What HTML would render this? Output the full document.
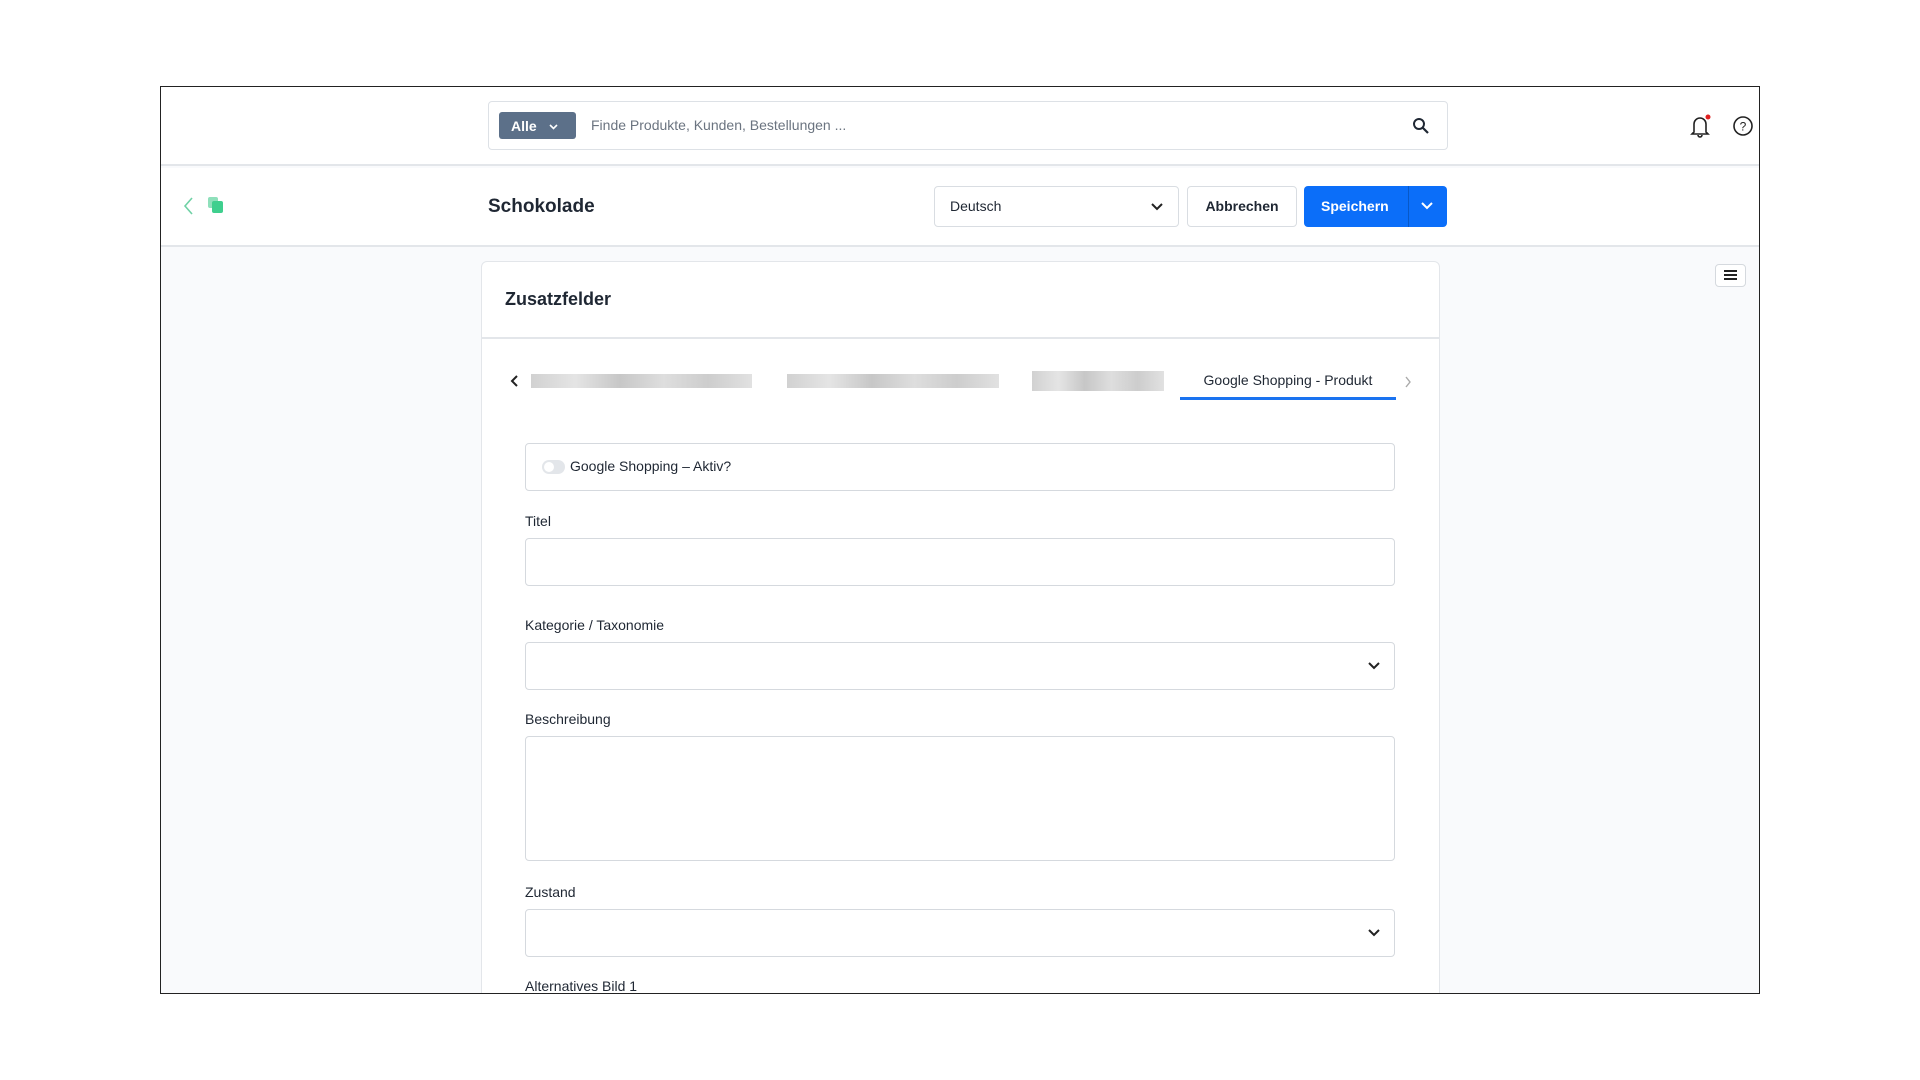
<!DOCTYPE html>
<html><head><meta charset="utf-8"><style>
*{box-sizing:border-box;margin:0;padding:0}
body{width:1920px;height:1080px;background:#fff;font-family:"Liberation Sans",Arial,sans-serif;color:#1f2733;position:relative;overflow:hidden}
.frame{position:absolute;left:160px;top:86px;width:1600px;height:908px;border:1.5px solid #222;overflow:hidden;background:#f9fafc}
.abs{position:absolute}
.top{left:0;top:0;width:100%;height:79px;background:#fff;border-bottom:2px solid #e3e6ea}
.bar2{left:0;top:81px;width:100%;height:79px;background:#fff;border-bottom:2px solid #e3e6ea}
.search{left:327px;top:14px;width:960px;height:49px;border:1.5px solid #dde1e6;border-radius:4px;background:#fff}
.alle{left:10px;top:10px;width:77px;height:27px;background:#5c7089;border-radius:3px;color:#fff;font-weight:bold;font-size:14px;line-height:28px;padding-left:12px}
.ph{left:102px;top:15px;font-size:14px;color:#6b7480}
.btn{border:1.5px solid #d9dde2;border-radius:4px;background:#fff;font-size:14px;line-height:38px}
.card{left:320px;top:174px;width:959px;height:760px;background:#fff;border:1.5px solid #e3e6ea;border-radius:6px}
.lbl{font-size:14px;color:#1f2733;position:absolute;left:43px}
.inp{position:absolute;left:43px;width:870px;border:1.5px solid #d5d9de;border-radius:4px;background:#fff}
.blur{position:absolute;top:112px;height:14px;background:linear-gradient(90deg,#c9c9c9,#e0e0e0 20%,#bdbdbd 40%,#d8d8d8 60%,#c4c4c4 80%,#dcdcdc);opacity:.85}
</style></head><body>
<div class="frame">
 <div class="abs top">
  <div class="abs search">
   <div class="abs alle">Alle <svg style="margin-left:8px;vertical-align:1px" width="9" height="6" viewBox="0 0 9 6"><path d="M1 1l3.5 3.5L8 1" fill="none" stroke="#fff" stroke-width="1.6"/></svg></div>
   <div class="abs ph">Finde Produkte, Kunden, Bestellungen ...</div>
   <svg class="abs" style="left:923px;top:15px" width="18" height="18" viewBox="0 0 18 18"><circle cx="7" cy="7" r="5" fill="none" stroke="#1f2733" stroke-width="2"/><path d="M11 11l5 5" stroke="#1f2733" stroke-width="2.2"/></svg>
  </div>
  <svg class="abs" style="left:1528px;top:26px" width="24" height="26" viewBox="0 0 24 26"><path d="M5 19V11a6 6 0 0112 0v8l2 2H3z" fill="none" stroke="#222" stroke-width="1.6"/><path d="M9 22a2 2 0 004 0" fill="none" stroke="#222" stroke-width="1.6"/><circle cx="19" cy="4" r="2.5" fill="#e02020"/></svg>
  <svg class="abs" style="left:1571px;top:28px" width="22" height="22" viewBox="0 0 22 22"><circle cx="11" cy="11" r="9" fill="none" stroke="#222" stroke-width="1.6"/><text x="11" y="15.5" text-anchor="middle" font-size="12" font-family="Liberation Sans" fill="#222">?</text></svg>
 </div>
 <div class="abs bar2">
  <svg class="abs" style="left:21px;top:28px" width="12" height="20" viewBox="0 0 12 20"><path d="M10 2L3 10l7 8" fill="none" stroke="#6fd1a5" stroke-width="1.6"/></svg>
  <svg class="abs" style="left:46px;top:28px" width="18" height="18" viewBox="0 0 18 18"><rect x="1" y="1" width="10" height="11" rx="2" fill="#8fe0bb"/><rect x="5" y="5" width="11" height="12" rx="2" fill="#3fcf8e"/></svg>
  <div class="abs" style="left:327px;top:28px;font-size:19px;font-weight:bold">Schokolade</div>
  <div class="abs btn" style="left:773px;top:18px;width:245px;height:41px;padding-left:15px">Deutsch<svg class="abs" style="right:15px;top:16px" width="12" height="9" viewBox="0 0 12 9"><path d="M1 1l5 5 5-5" fill="none" stroke="#222" stroke-width="2"/></svg></div>
  <div class="abs btn" style="left:1026px;top:18px;width:110px;height:41px;text-align:center;font-weight:bold">Abbrechen</div>
  <div class="abs" style="left:1143px;top:18px;width:143px;height:41px;background:#0b6ef9;border-radius:4px;color:#fff;font-weight:bold;font-size:14px;line-height:41px;padding-left:17px">Speichern
   <div class="abs" style="left:104px;top:0;width:1px;height:41px;background:#0758c8"></div>
   <svg class="abs" style="left:117px;top:16px" width="12" height="9" viewBox="0 0 12 9"><path d="M1 1l5 5 5-5" fill="none" stroke="#fff" stroke-width="2"/></svg>
  </div>
 </div>
 <div class="abs" style="left:1554px;top:177px;width:31px;height:23px;border:1.5px solid #d5d9de;border-radius:4px;background:#fff">
  <div class="abs" style="left:8px;top:5px;width:13px;height:2px;background:#222;box-shadow:0 4px 0 #222,0 8px 0 #222"></div>
 </div>
 <div class="abs card">
  <div class="abs" style="left:23px;top:27px;font-size:18px;font-weight:bold">Zusatzfelder</div>
  <div class="abs" style="left:0;top:75px;width:100%;height:1.5px;background:#e3e6ea"></div>
  <svg class="abs" style="left:28px;top:113px" width="10" height="12" viewBox="0 0 10 12"><path d="M7 1L2 6l5 5" fill="none" stroke="#222" stroke-width="2"/></svg>
  <div class="blur" style="left:49px;width:221px"></div>
  <div class="blur" style="left:305px;width:212px"></div>
  <div class="blur" style="left:550px;width:132px;height:20px;top:109px"></div>
  <div class="abs" style="left:698px;top:110px;width:216px;text-align:center;font-size:14px">Google Shopping - Produkt</div>
  <div class="abs" style="left:698px;top:135px;width:216px;height:2.5px;background:#1a73f0"></div>
  <svg class="abs" style="left:922px;top:114px" width="8" height="12" viewBox="0 0 8 12"><path d="M2 1l4 5-4 5" fill="none" stroke="#aaa" stroke-width="1.4"/></svg>
  <div class="inp" style="top:181px;height:48px">
   <div class="abs" style="left:16px;top:16px;width:23px;height:14px;border-radius:7px;background:#e3e6ea"><div class="abs" style="left:2px;top:2px;width:10px;height:10px;border-radius:5px;background:#fff"></div></div>
   <div class="abs" style="left:44px;top:14px;font-size:14px">Google Shopping – Aktiv?</div>
  </div>
  <div class="lbl" style="top:251px">Titel</div>
  <div class="inp" style="top:276px;height:48px"></div>
  <div class="lbl" style="top:355px">Kategorie / Taxonomie</div>
  <div class="inp" style="top:380px;height:48px"><svg class="abs" style="right:14px;top:19px" width="12" height="9" viewBox="0 0 12 9"><path d="M1 1l5 5 5-5" fill="none" stroke="#222" stroke-width="2"/></svg></div>
  <div class="lbl" style="top:449px">Beschreibung</div>
  <div class="inp" style="top:474px;height:125px"></div>
  <div class="lbl" style="top:622px">Zustand</div>
  <div class="inp" style="top:647px;height:48px"><svg class="abs" style="right:14px;top:19px" width="12" height="9" viewBox="0 0 12 9"><path d="M1 1l5 5 5-5" fill="none" stroke="#222" stroke-width="2"/></svg></div>
  <div class="lbl" style="top:716px">Alternatives Bild 1</div>
 </div>
</div>
</body></html>
